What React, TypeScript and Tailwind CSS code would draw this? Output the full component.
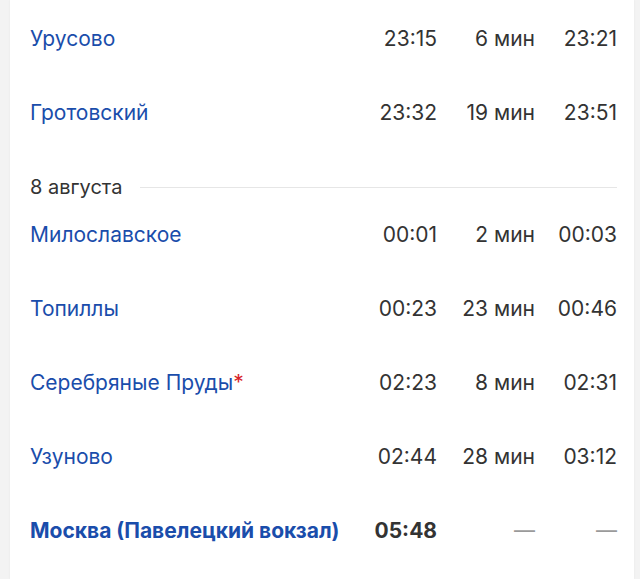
import React from "react";

type Row = { name: string; arr: string; stop: string; dep: string; star?: boolean; bold?: boolean };

const rowsA: Row[] = [
  { name: "Урусово", arr: "23:15", stop: "6 мин", dep: "23:21" },
  { name: "Гротовский", arr: "23:32", stop: "19 мин", dep: "23:51" },
];
const rowsB: Row[] = [
  { name: "Милославское", arr: "00:01", stop: "2 мин", dep: "00:03" },
  { name: "Топиллы", arr: "00:23", stop: "23 мин", dep: "00:46" },
  { name: "Серебряные Пруды", arr: "02:23", stop: "8 мин", dep: "02:31", star: true },
  { name: "Узуново", arr: "02:44", stop: "28 мин", dep: "03:12" },
  { name: "Москва (Павелецкий вокзал)", arr: "05:48", stop: "—", dep: "—", bold: true },
];

function StationRow({ r }: { r: Row }) {
  return (
    <div className="flex h-[74px] items-center text-[21px] leading-none">
      <div className={`flex-1 text-[#1a4dab] ${r.bold ? "font-bold" : ""}`}>
        {r.name}
        {r.star && <span className="text-[#d8232a]">*</span>}
      </div>
      <div className={`w-[90px] text-right text-[#333333] ${r.bold ? "font-bold" : ""}`}>{r.arr}</div>
      <div className={`w-[98px] text-right ${r.stop === "—" ? "text-[#9a9a9a]" : "text-[#333333]"}`}>{r.stop}</div>
      <div className={`w-[82px] text-right ${r.dep === "—" ? "text-[#9a9a9a]" : "text-[#333333]"}`}>{r.dep}</div>
    </div>
  );
}

export default function App() {
  return (
    <div
      className="h-[579px] w-[640px] overflow-hidden bg-[#f3f3f3] pl-[10px] pr-[6px]"
      style={{ fontFamily: "Inter, 'Noto Sans', sans-serif" }}
    >
      <div className="h-full bg-white pl-[20px] pr-[17px] pt-[1px] shadow-[0_0_2px_rgba(0,0,0,0.06)]">
        {rowsA.map((r) => (
          <StationRow key={r.name} r={r} />
        ))}
        <div className="flex h-[48px] items-end">
          <div className="flex w-full items-center">
            <span className="text-[20px] leading-[20px] text-[#333333]">8 августа</span>
            <div className="ml-[18px] h-px flex-1 bg-[#e6e6e6]" />
          </div>
        </div>
        {rowsB.map((r) => (
          <StationRow key={r.name} r={r} />
        ))}
      </div>
    </div>
  );
}
